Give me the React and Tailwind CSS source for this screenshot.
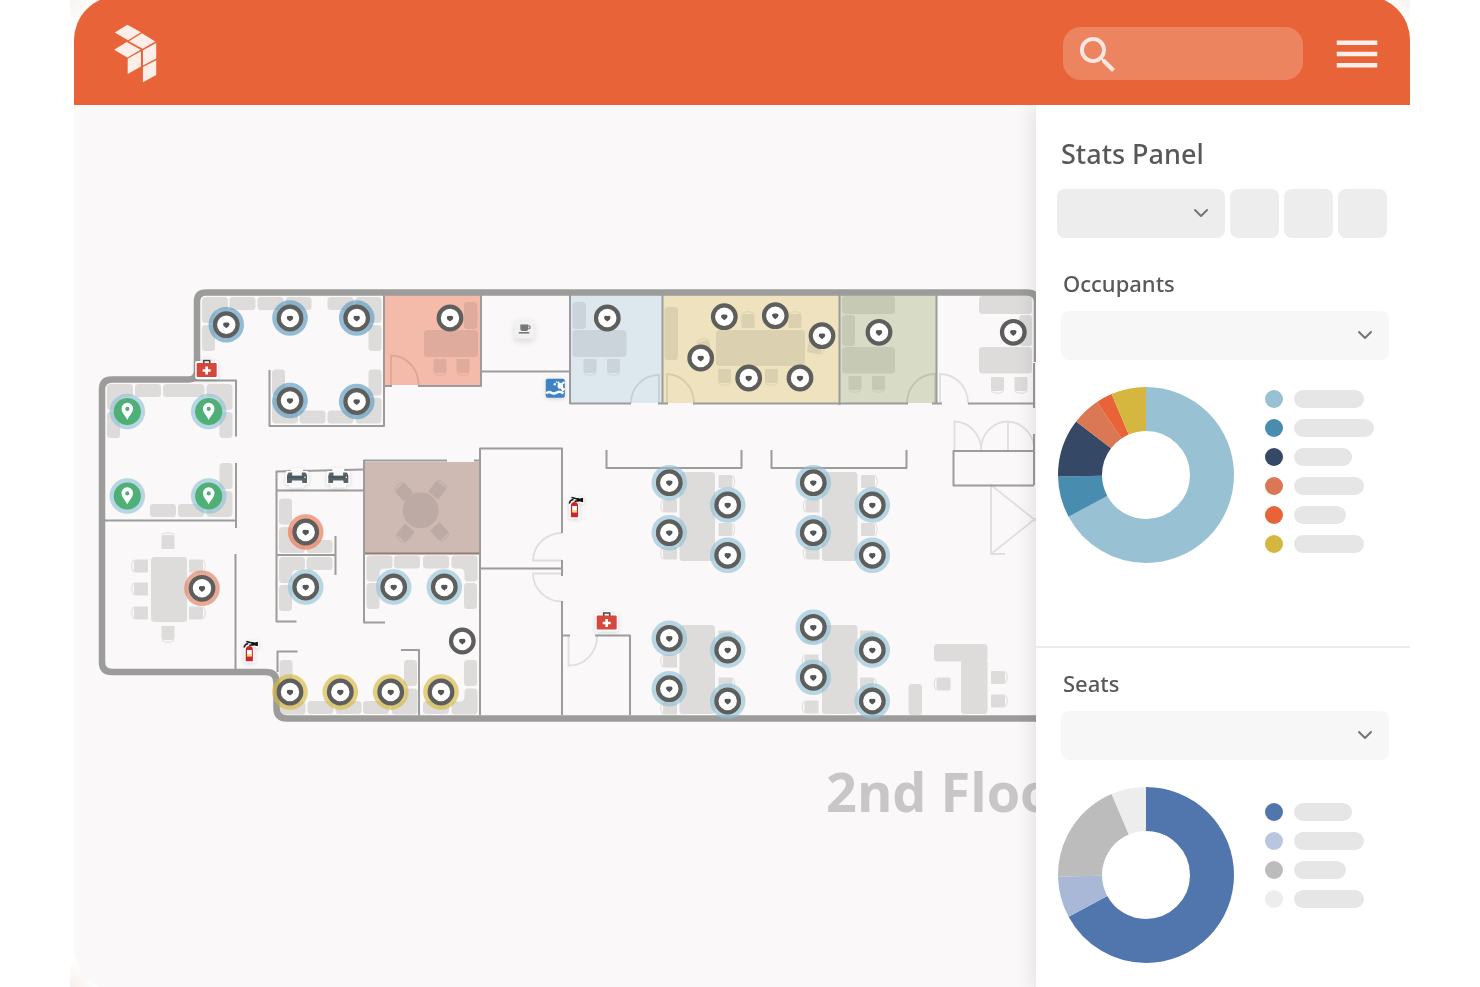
import React from "react";
import { MdMenu, MdSearch } from "react-icons/md";
import { ChevronDown } from "lucide-react";

const occupants = [
  { color: "#98c1d3", share: 67.1, bar: "w-[70px]" },
  { color: "#488cb0", share: 7.6, bar: "w-20" },
  { color: "#354866", share: 10.7, bar: "w-[58px]" },
  { color: "#da7755", share: 5.2, bar: "w-[70px]" },
  { color: "#e86438", share: 3.0, bar: "w-[52px]" },
  { color: "#d5b73f", share: 6.4, bar: "w-[70px]" },
];

const seats = [
  { color: "#5175ad", share: 67.1, bar: "w-[58px]" },
  { color: "#a8b8d6", dot: "#b8c6df", share: 7.6, bar: "w-[70px]" },
  { color: "#bcbcbc", share: 18.9, bar: "w-[52px]" },
  { color: "#ededed", share: 6.4, bar: "w-[70px]" },
];

// x, y, width, height
const rooms = [
  { box: [384, 295, 97, 90], color: "#f4bbaa" },
  { box: [570, 295, 92, 108], color: "#dde8ee" },
  { box: [662, 295, 177, 108], color: "#efe3bf" },
  { box: [840, 295, 97, 108], color: "#d8dbc5" },
  { box: [364, 462, 116, 91], color: "#cfbab3" },
];

const blocks = [
  [229.5, 297, 26, 13], [257.5, 297, 26, 13], [285.5, 297, 26, 13], [327.5, 297, 26, 13],
  [368.5, 325, 13, 26], [202, 325, 13, 26], [272, 369.5, 13, 26], [299.5, 410.5, 26, 13],
  [327.5, 410.5, 26, 13], [368.5, 369.5, 13, 26],
  [135, 384, 26, 13], [163, 384, 41.5, 13], [107, 412, 13, 26], [219.5, 412, 13, 26],
  [219.5, 463, 13, 26], [178, 504, 26, 13], [150, 504, 26, 13],
  [151, 557, 36, 65],
  [279, 498.5, 13, 26], [306.5, 540, 26, 13], [306.5, 557, 26, 13], [279, 585, 13, 26],
  [394, 555.5, 26, 13], [423, 555.5, 26, 13], [366.5, 583, 13, 26], [464, 583, 13, 26],
  [464, 660, 13, 26], [423, 701, 26, 13], [404, 660, 13, 26], [363, 701, 26, 13],
  [335.5, 701, 26, 13], [307.5, 701, 26, 13], [279.5, 660, 13, 26],
  [908.5, 684, 13.5, 31], [934, 644, 53.5, 17.5], [961, 660, 26.5, 54],
  [679.5, 472, 35.5, 89], [822, 472, 35.5, 89], [679.5, 625, 35.5, 89], [822, 625, 35.5, 89],
  [979, 296, 53, 18], [1019, 315, 13, 31], [979, 347, 53, 26.5],
];

const roomBlocks = [
  [424, 330, 54, 27], [464, 302, 13.5, 27],
  [572.5, 302, 13.5, 27], [572.5, 330, 54, 27],
  [664.5, 307, 13.5, 53], [716, 330, 89, 36],
  [842, 296, 53, 18], [842, 315, 13, 31], [842, 347, 53, 26.5],
];

// x, y of the outer corner and the direction it opens to
const corners = [
  [202, 297, 1, 1], [381.5, 297, -1, 1], [272, 423.5, 1, -1], [381.5, 423.5, -1, -1],
  [107, 384, 1, 1], [232.5, 384, -1, 1], [232.5, 517, -1, -1],
  [279, 553, 1, -1], [279, 557, 1, 1], [366.5, 555.5, 1, 1], [477.5, 555.5, -1, 1],
  [477.5, 714.5, -1, -1], [417.5, 714.5, -1, -1], [279.5, 714.5, 1, -1],
];

// x, y, rotation; at 0 the back of the chair points down
const chairs = [
  [168, 542, 180], [168, 633, 0], [141, 566, 90], [141, 589, 90], [141, 613, 90],
  [196, 566, -90], [196, 613, -90],
  [725.5, 481.5, -90], [725.5, 529.5, -90], [868, 481.5, -90], [868, 529.5, -90],
  [670, 506, 90], [670, 553, 90], [812.5, 506, 90], [812.5, 553, 90],
  [670, 661, 90], [670, 708, 90], [725.5, 637, -90], [725.5, 684, -90],
  [811.5, 637, 90], [811.5, 661, 90], [811.5, 707, 90], [867, 637, -90], [867, 684, -90],
  [943.5, 684, 90], [998, 677.5, -90], [998, 701, -90],
  [997.5, 384, 0], [1021, 384, 0],
];

const roomChairs = [
  [440, 366, 0], [463, 366, 0], [590, 366, 0], [613.5, 366, 0],
  [748, 321, 180], [795, 321, 180], [724.5, 376, 0], [771.5, 376, 0],
  [704, 348, 170], [815, 347, -80],
  [855, 383, 0], [878.5, 383, 0],
  [404, 492, 138], [437.5, 490, -142], [405.5, 533, 40], [439.5, 531.5, -42],
];

const halos = {
  blue: "#5c9bc0",
  light: "#93c2d5",
  red: "#ec7350",
  salmon: "#df7f62",
  yellow: "#d6b93f",
};

const pins = [
  [226.3, 324.7, "blue"], [290, 318, "blue"], [356.7, 318, "blue"], [290, 400.5, "blue"],
  [356.7, 401.5, "blue"],
  [305.7, 532, "red"], [202, 588.3, "salmon"], [305.7, 587, "light"],
  [393.7, 587, "light"], [444.3, 587, "light"], [462.3, 641],
  [290, 692, "yellow"], [340.3, 692, "yellow"], [390.7, 692, "yellow"], [441, 692, "yellow"],
  [450, 318], [607.3, 318], [724.3, 316.7], [775.3, 315.7], [822, 335.7], [700.7, 358],
  [748.7, 378], [800, 378], [879, 332.3], [1013.3, 332.3],
  [669.3, 482.7, "light"], [669.3, 532.7, "light"], [727.7, 505, "light"], [727.7, 555.3, "light"],
  [813.3, 482.7, "light"], [813.3, 532.7, "light"], [872.3, 505, "light"], [872.3, 555.3, "light"],
  [669.3, 638.3, "light"], [669.3, 688.7, "light"], [727.7, 650, "light"], [727.7, 701, "light"],
  [813.3, 627.3, "light"], [813.3, 677.3, "light"], [872.3, 650, "light"], [872.3, 701, "light"],
];

const freePins = [[127.3, 411.5], [208.7, 411.5], [127.3, 496], [208.7, 496]];

const walls = [
  "M190 380.5H236V436.5M236 463V528M105 520.5H236M235.5 554V669",
  "M269.5 370V426H384V295M481 295V386H418M392 386H384",
  "M364 469.5L276.5 471.5V621.5H296.5M276.5 490.5H364M276.5 555H335.5M335.5 536V575",
  "M447 460.5H364V622.5H385M474 460.5H480M480 715V448.5H562V533M562 560V576M562 601V715M480 568.5H562",
  "M562 635.5H570M595 635.5H630V715M277.5 672V651.5H297.5M401 650H419V715",
  "M481 371.5H570M570 295V403.5H631M658 403.5H668M662.5 295V403M693 403.5H908M839.5 295V405M936.5 295V403M932 403.5H942M968 403.5H1034",
  "M606.5 450V468H741.5V450M771.5 450V468H906.5V450",
  "M1034 485.5H953.5V451H1034M1034 363V408M1034 434V485",
];

const Logo = () => (
  <svg viewBox="130 73 132 178" className="h-[59px] w-11" fill="#fdeee9">
    <path d="M135 99L173 75L214 98L175 122Z" />
    <path d="M178 125L217 101L257 126L219 148Z" />
    <path d="M133 151L171 127L213 151L173 174Z" />
    <path d="M174 178L214 155V201L174 224Z" />
    <path d="M220 152L260 130V177L220 198Z" />
    <path d="M220 203L260 182V227L220 249Z" />
  </svg>
);

const Block = ({ box: [x, y, width, height] }) => (
  <rect x={x} y={y} width={width} height={height} rx="3.5" />
);

const Chair = ({ at: [x, y, angle] }) => (
  <g transform={`translate(${x} ${y}) rotate(${angle})`}>
    <path d="M-5.5 -7H5.5Q6.5 -7 6.5 -6V5Q6.5 7 4.5 7H-4.5Q-6.5 7 -6.5 5V-6Q-6.5 -7 -5.5 -7Z" />
    <path d="M-6.3 7.3Q0 11.3 6.3 7.3" fill="none" stroke="#23281a" strokeWidth="1" />
  </g>
);

const Pin = ({ at: [x, y, halo] }) => (
  <g transform={`translate(${x} ${y})`}>
    {halo && <circle r="17.8" fill={halos[halo]} opacity="0.65" />}
    <circle r="11.3" fill="#fff" stroke="#5e5e5d" strokeWidth="4.2" />
    <path d="M0 3.6L-2.6 1.4Q-3.8 -0.2 -2.8 -1.8Q-1.6 -2.5 0 -2.1Q1.6 -2.5 2.8 -1.8Q3.8 -0.2 2.6 1.4Z" fill="#555" />
  </g>
);

const FreePin = ({ at: [x, y] }) => (
  <g transform={`translate(${x} ${y})`}>
    <circle r="17.8" fill={halos.light} opacity="0.65" />
    <circle r="13.6" fill="#4fb077" />
    <path d="M0 8.5C-1.5 4.5 -5.8 1.5 -5.8 -3A5.8 5.8 0 0 1 5.8 -3C5.8 1.5 1.5 4.5 0 8.5Z" fill="#fff" />
    <circle cy="-2.6" r="2.1" fill="#4fb077" />
  </g>
);

const FirstAid = ({ x, y }) => (
  <g transform={`translate(${x} ${y})`} className="drop-shadow-sm">
    <path d="M-11.5 -7Q-11.5 -8.5 -10 -8.5H-4.5V-11H4.5V-8.5H10Q11.5 -8.5 11.5 -7V8Q11.5 9.5 10 9.5H-10Q-11.5 9.5 -11.5 8Z" fill="#fff" />
    <path d="M-3 -6V-9H3V-6" fill="none" stroke="#444" strokeWidth="1.6" />
    <rect x="-10" y="-6.5" width="20" height="14" rx="1" fill="#d4473d" />
    <path d="M0 -3V5M-4 1H4" stroke="#fff" strokeWidth="2.6" />
  </g>
);

const Extinguisher = ({ x, y }) => (
  <g transform={`translate(${x} ${y})`} className="drop-shadow-sm">
    <path d="M-5.5 -4Q-5 -8 -2 -10L9.5 -11.5V-4L3 -5.5Q5 -4 5 0V10.5H-5Z" fill="#fff" />
    <path d="M-3.6 9.3V-2Q-3.6 -6 0 -6Q3.6 -6 3.6 -2V9.3Z" fill="#c9252b" />
    <rect x="-2.3" y="-2" width="4.8" height="6" fill="#fff" />
    <rect x="-2.3" y="2" width="4.8" height="2.6" fill="#f3dc7c" />
    <path d="M-5.3 -4.5Q-3.5 -9 -1 -8M-3 -10.5L1 -9.5L4 -9V-7.2L0 -6.8" fill="none" stroke="#111" strokeWidth="1.5" />
    <path d="M2 -8.8L8.6 -10.3V-5.8L2 -7.2Z" fill="#111" />
  </g>
);

const PrinterMark = ({ x, y }) => (
  <g transform={`translate(${x} ${y})`} className="drop-shadow-sm">
    <path d="M-6 -9.5H6V-7H10.5Q11.5 -6 11.5 -5V6.5H7.5V9.5H-7.5V6.5H-11.5V-5Q-11.5 -6 -10.5 -7H-6Z" fill="#fff" />
    <path d="M-8.5 -5.5H8.5Q10 -4 10 -2V5H-10V-2Q-10 -4 -8.5 -5.5Z" fill="#56636a" />
    <path d="M-9.8 -1.5H9.8V-0.2H-9.8Z" fill="#465157" />
    <rect x="-4.8" y="-8" width="9.6" height="5.6" fill="#f8f8f8" />
    <path d="M-5 2.5H5L6 8H-6Z" fill="#f8f8f8" />
    <circle cx="8" cy="-0.7" r="0.8" fill="#fff" />
  </g>
);

const Plan = () => (
  <svg
    viewBox="74 105 962 886"
    preserveAspectRatio="xMinYMin slice"
    className="absolute inset-0 h-full w-full"
    role="img"
  >
    {rooms.map(({ box: [x, y, width, height], color }) => (
      <rect key={x} x={x} y={y} width={width} height={height} fill={color} />
    ))}

    <g opacity="0.13" fill="#23281a">
      {blocks.map((box, i) => <Block key={i} box={box} />)}
      {corners.map(([x, y, sx, sy], i) => (
        <path
          key={i}
          transform={`translate(${x} ${y}) scale(${sx} ${sy})`}
          d="M4 0H22.5Q26 0 26 4V9.5Q26 13 22.5 13H18Q13 13 13 18V22.5Q13 26 9.5 26H4Q0 26 0 22.5V4Q0 0 4 0Z"
        />
      ))}
      {chairs.map((at, i) => <Chair key={i} at={at} />)}
    </g>
    <g opacity="0.085">
      {roomBlocks.map((box, i) => <Block key={i} box={box} />)}
      {roomChairs.map((at, i) => <Chair key={i} at={at} />)}
      <circle cx="420.7" cy="510.3" r="18" />
    </g>

    {/* doors and stairs */}
    <g fill="none" stroke="#000" strokeWidth="1.8" opacity="0.1">
      <path d="M391 385V355.5A27.5 29 0 0 1 418.5 385" />
      <path d="M659 403V375A28 28 0 0 0 631 403" />
      <path d="M667 403V374A28 29 0 0 1 694 403" />
      <path d="M935 403V374A28 29 0 0 0 907 403" />
      <path d="M940 403V374A28 29 0 0 1 968 403" />
      <path d="M954.5 450V421.5A27 28 0 0 1 981 450A27 28 0 0 1 1008 421.5V450M1008 421.5A28 28 0 0 1 1034 446" />
      <path d="M562 533A29 28 0 0 0 533 560.5H562M562 573.5H533A29 28 0 0 0 562 601.5" />
      <path d="M568.5 636V665.5A28 29 0 0 0 597 636" />
      <path d="M1005 554H991V485L1040 524M991 554L1040 515" />
    </g>

    <path d="M365 553.5H479" stroke="#947c75" strokeWidth="2" />
    <g fill="none" stroke="#9b9c9b" strokeWidth="2" strokeLinejoin="round">
      {walls.map((d) => <path key={d} d={d} />)}
    </g>
    <path
      d="M1037 362V302Q1037 292.5 1027 292.5H206Q197 292.5 197 301.5V371Q197 379.5 188 379.5H112Q102 379.5 102 389.5V662Q102 672 112 672H266Q276.5 672 276.5 682.5V708Q276.5 718.5 287 718.5H1040"
      fill="none"
      stroke="#9c9c9b"
      strokeWidth="6.5"
    />

    {pins.map((at, i) => <Pin key={i} at={at} />)}
    {freePins.map((at, i) => <FreePin key={i} at={at} />)}
    <FirstAid x={206.7} y={369.5} />
    <FirstAid x={606.7} y={622} />
    <Extinguisher x={574.5} y={508} />
    <Extinguisher x={249.3} y={652} />
    <PrinterMark x={297} y={478} />
    <PrinterMark x={338.3} y={478} />

    {/* kitchen */}
    <g transform="translate(524.3 329)">
      <rect x="-9.5" y="-9.5" width="19" height="19" rx="2" fill="#f1f1f1" className="drop-shadow-md" />
      <path d="M-4 -4.5H4V0Q4 2 2 2H-2Q-4 2 -4 0Z" fill="#777" />
      <path d="M4 -3.3H4.8Q5.8 -3.3 5.8 -2V-1.5Q5.8 -0.2 4.5 -0.2H4" fill="none" stroke="#777" strokeWidth="1.1" />
      <path d="M-5.5 3.8H5" stroke="#777" strokeWidth="1.6" />
    </g>

    {/* pool */}
    <g transform="translate(555.3 388.3)">
      <rect x="-9.5" y="-9.5" width="19" height="19" rx="2" fill="#3d82c4" className="drop-shadow-sm" />
      <path d="M-9 5Q-6.5 2.6 -4 4.4T1.5 4.2T8 5.2" fill="none" stroke="#fff" strokeWidth="2.4" />
      <path d="M2.5 -6.5L5 -3.5L9.2 -6.2M5 -2.5L7.5 1.8L9.2 0" fill="none" stroke="#fff" strokeWidth="2" />
      <circle cx="5" cy="-2.4" r="2.8" fill="#fff" />
      <circle cx="-0.5" cy="-4" r="1.2" fill="#fff" />
      <circle cx="1.2" cy="-6.3" r="0.8" fill="#fff" />
    </g>

    <text
      x="826"
      y="812"
      className="fill-[#c8c6c7] font-['Open_Sans','Noto_Sans',sans-serif] text-[54px] font-bold"
    >
      2nd Floor
    </text>
  </svg>
);

const Donut = ({ data }) => {
  let start = 0;
  return (
    <svg viewBox="0 0 176 176" className="size-44 shrink-0">
      <g transform="rotate(-90 88 88)" fill="none" strokeWidth="44">
        {data.map(({ color, share }) => {
          const offset = start;
          start += share;
          return (
            <circle
              key={color}
              cx="88"
              cy="88"
              r="66"
              pathLength="100"
              stroke={color}
              strokeDasharray={`${share} ${100 - share}`}
              strokeDashoffset={-offset}
            />
          );
        })}
      </g>
    </svg>
  );
};

const StatsSection = ({ id, title, data, legendClass, className }) => (
  <section className={className}>
    <h3 id={id} className="pl-[27px] text-[22px] leading-8 font-medium">{title}</h3>
    <div className="relative mt-3 mr-[21px] ml-[25px]">
      <select
        aria-labelledby={id}
        className="block h-[49px] w-full appearance-none rounded-lg bg-[#f7f7f7] px-4"
      />
      <ChevronDown size={24} className="pointer-events-none absolute top-3 right-3 text-[#757575]" />
    </div>
    <div className="mt-[27px] flex items-start gap-[31px] pl-[22px]">
      <Donut data={data} />
      <ul className={`flex flex-col gap-[11px] ${legendClass}`}>
        {data.map(({ color, dot, bar }) => (
          <li key={color} className="flex items-center gap-[11px]">
            <span className="size-[18px] rounded-full" style={{ backgroundColor: dot || color }} />
            <span className={`h-[18px] rounded-full bg-[#e6e6e6] ${bar}`} />
          </li>
        ))}
      </ul>
    </div>
  </section>
);

const App = () => {
  return (
    <div className="h-screen overflow-hidden bg-white px-[70px] font-['Noto_Sans','Open_Sans',sans-serif] text-[#585858]">
      <div className="flex h-full flex-col bg-[radial-gradient(circle_at_0_0,#f6f2ef,transparent_24px),radial-gradient(circle_at_100%_0,#f6f2ef,transparent_24px),radial-gradient(circle_at_0_100%,#f6efeb,transparent_26px)] pl-1">
        <div className="-my-1 flex min-h-0 flex-1 flex-col overflow-hidden rounded-[44px]">
          <header className="relative z-10 flex h-[109px] shrink-0 items-center justify-between bg-[#e86438] pt-1.5 pr-[26px] pl-[39px]">
            <a href="#" aria-label="Home">
              <Logo />
            </a>
            <div className="flex items-center gap-[27px]">
              <label className="flex h-[53px] w-60 items-center rounded-[18px] bg-[#ed8460] pl-[11px]">
                <MdSearch size={48} className="mt-0.5 shrink-0 text-[#f7e7e2]" />
                <input type="search" aria-label="Search" className="h-full min-w-0 flex-1 bg-transparent text-xl text-white outline-none" />
              </label>
              <button type="button" aria-label="Menu" className="text-[#fdeee9]">
                <MdMenu size={54} />
              </button>
            </div>
          </header>

          <div className="flex min-h-0 flex-1">
            <main className="relative min-w-0 flex-1 overflow-hidden bg-[#faf8f9]">
              <Plan />
            </main>

            <aside className="relative w-[374px] shrink-0 bg-white shadow-[-2px_0_20px_rgba(0,0,0,0.11)]">
              <h2 className="pt-[33px] pl-[25px] text-[27px] leading-8 font-medium">Stats Panel</h2>
              <div className="mt-[19px] flex gap-[5px] pr-[23px] pl-[21px]">
                <div className="relative flex-1">
                  <select aria-label="View" className="block h-[49px] w-full appearance-none rounded-lg bg-[#ededed] px-4" />
                  <ChevronDown size={24} className="pointer-events-none absolute top-3 right-3 text-[#757575]" />
                </div>
                <button type="button" aria-label="Filter" className="size-[49px] rounded-lg bg-[#ededed]" />
                <button type="button" aria-label="Export" className="size-[49px] rounded-lg bg-[#ededed]" />
                <button type="button" aria-label="Settings" className="size-[49px] rounded-lg bg-[#ededed]" />
              </div>

              <StatsSection
                id="occupants"
                title="Occupants"
                data={occupants}
                legendClass="pt-[3px]"
                className="pt-[29px] pb-[83px]"
              />
              <StatsSection
                id="seats"
                title="Seats"
                data={seats}
                legendClass="pt-4"
                className="border-t-2 border-[#ebebeb] pt-[19px]"
              />
            </aside>
          </div>
        </div>
      </div>
    </div>
  );
};

export default App;
